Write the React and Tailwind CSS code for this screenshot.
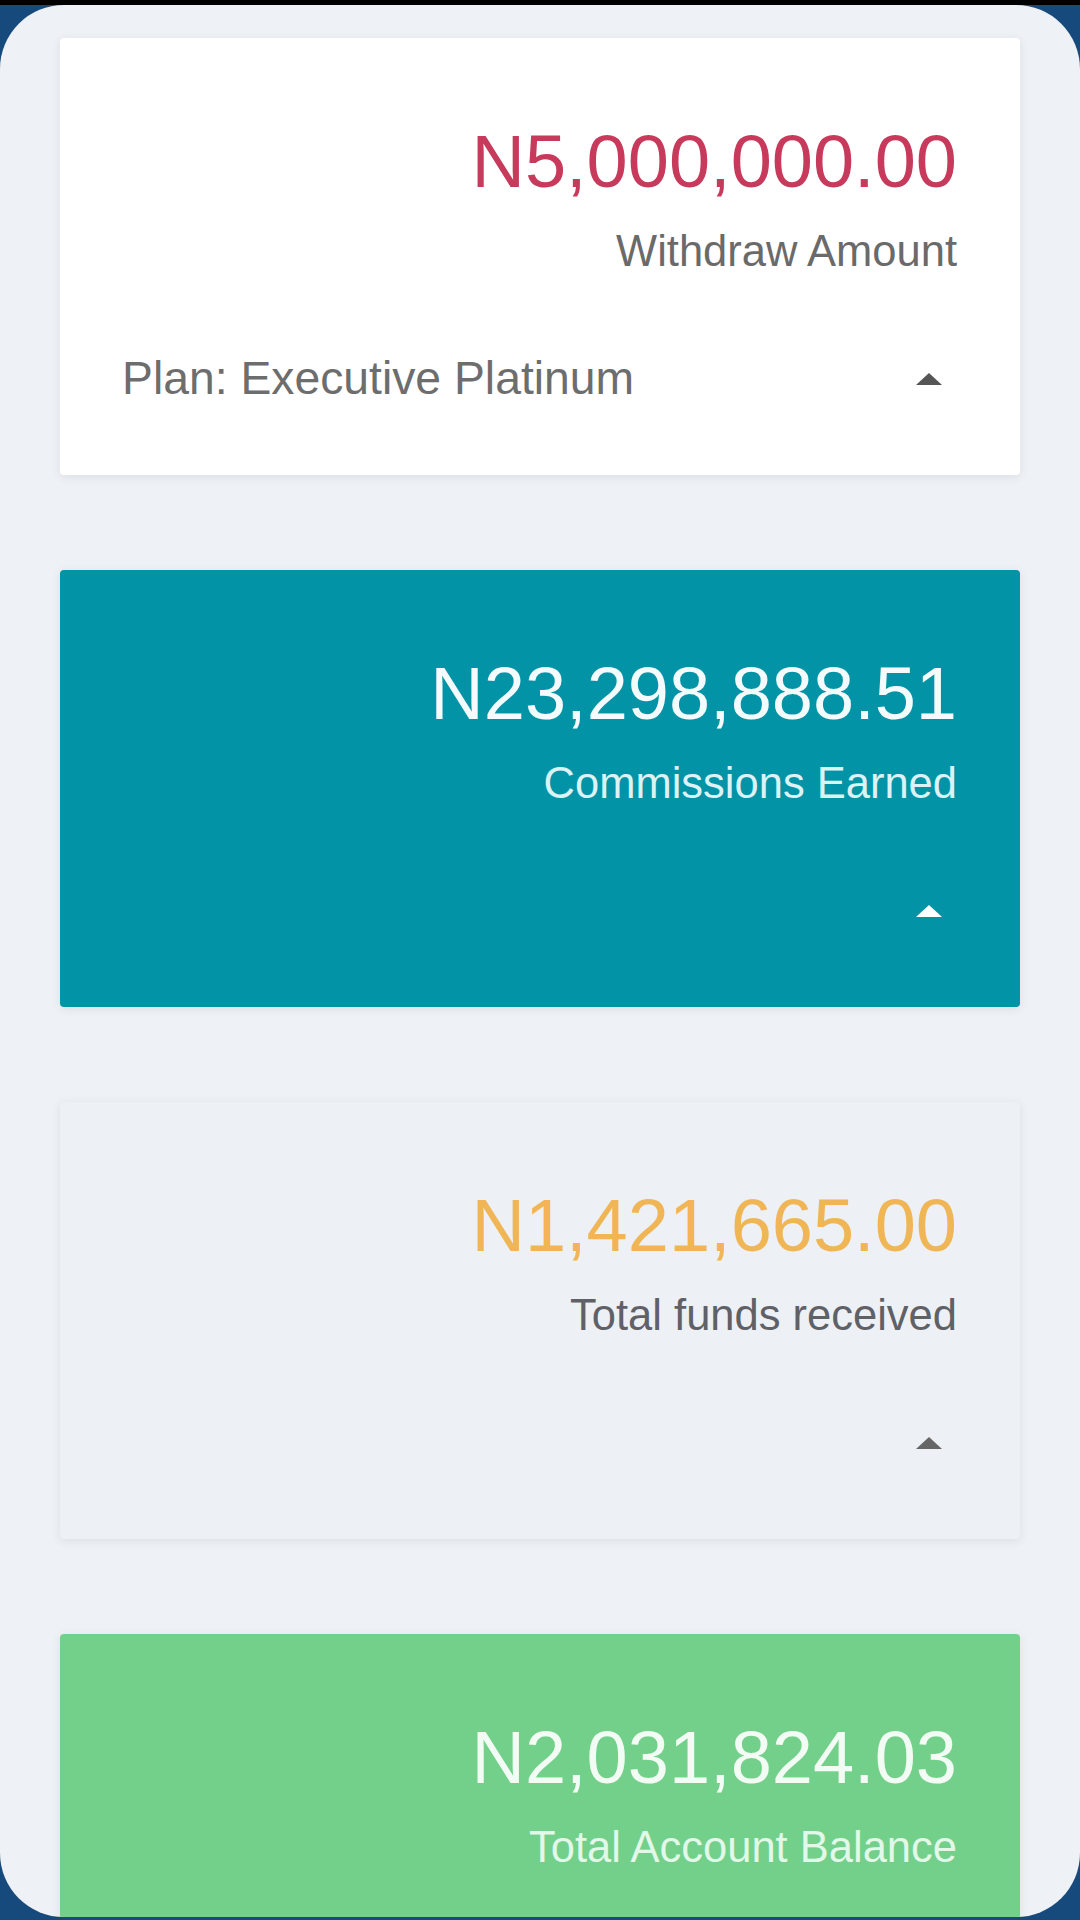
const cards = [
  {
    amount: "N5,000,000.00",
    label: "Withdraw Amount",
    plan: "Plan: Executive Platinum",
    box: "bg-white",
    amountColor: "text-[#c83a5c]",
    labelColor: "text-[#6a6a6a]",
    caret: "#555555",
  },
  {
    amount: "N23,298,888.51",
    label: "Commissions Earned",
    box: "bg-[#0393a6]",
    amountColor: "text-[#f4fbfc]",
    labelColor: "text-[#dcf3f6]",
    caret: "#ffffff",
  },
  {
    amount: "N1,421,665.00",
    label: "Total funds received",
    box: "bg-[#edf0f5]",
    amountColor: "text-[#f0b656]",
    labelColor: "text-[#5f6166]",
    caret: "#666666",
  },
  {
    amount: "N2,031,824.03",
    label: "Total Account Balance",
    box: "bg-[#72d08a]",
    amountColor: "text-[#f2fcf4]",
    labelColor: "text-[#e2f8e8]",
    caret: "#ffffff",
  },
];

const Caret = ({ color }) => (
  <svg width="28" height="14" viewBox="0 0 28 14" className="mr-[14px] shrink-0">
    <path d="M14 1 L27 13 L1 13 Z" fill={color} />
  </svg>
);

const StatCard = ({ card }) => (
  <div
    className={`${card.box} shrink-0 h-[437px] rounded-[4px] pt-[87px] pl-[62px] pr-[63px] shadow-[0_2px_10px_rgba(60,70,90,0.10)]`}
  >
    <p className={`${card.amountColor} text-right text-[74px] leading-none`}>{card.amount}</p>
    <p className={`${card.labelColor} text-right text-[43.5px] leading-none mt-[31px]`}>{card.label}</p>
    <div className="flex items-center justify-between h-[46px] mt-[82px]">
      <span className="text-[46.3px] leading-none text-[#6d6d6d]">{card.plan || ""}</span>
      <Caret color={card.caret} />
    </div>
  </div>
);

export default function App() {
  return (
    <div
      className="w-[1080px] h-[1920px] bg-[#174a7c] border-t-[5px] border-black overflow-hidden"
      style={{ fontFamily: '"Liberation Sans", Arial, sans-serif' }}
    >
      <div className="h-[1912px] rounded-[64px] bg-[#eef1f5] overflow-hidden flex flex-col gap-[95px] px-[60px] pt-[33px]">
        {cards.map((card) => (
          <StatCard key={card.label} card={card} />
        ))}
      </div>
    </div>
  );
}
